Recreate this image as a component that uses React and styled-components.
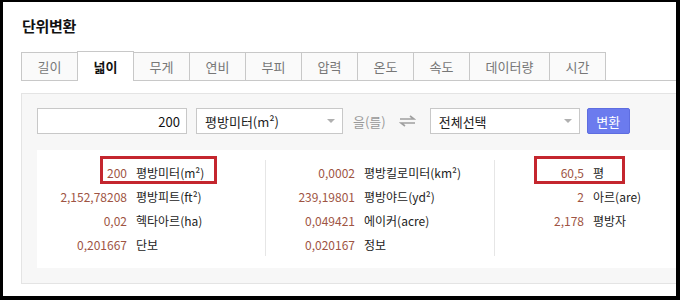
import React, { useState } from 'react';
import styled, { createGlobalStyle } from 'styled-components';

const GlobalStyle = createGlobalStyle`
  html, body {
    margin: 0;
    padding: 0;
    background: #000;
  }
  * {
    box-sizing: border-box;
  }
`;

const FONT = `"Noto Sans CJK KR", "Noto Sans", sans-serif`;

const Frame = styled.div`
  margin: 2px 4px 4px 3px;
  width: 673px;
  height: 294px;
  background: #fff;
  overflow: hidden;
  padding: 13px 0 0 18px;
  font-family: ${FONT};
`;

const Title = styled.h1`
  margin: 0 0 0 1px;
  font-size: 15px;
  line-height: 22px;
  font-weight: 700;
  color: #111;
  letter-spacing: -0.3px;
`;

const TabBar = styled.div`
  display: flex;
  align-items: flex-end;
  height: 30px;
  margin-top: 14px;
  width: 700px;
  border-bottom: 1px solid #c8c8c8;
`;

const Tab = styled.button`
  width: ${p => p.$wide ? 81 : 57}px;
  height: ${p => p.$active ? 30 : 28}px;
  margin: 0 -1px ${p => p.$active ? -1 : 0}px 0;
  padding: 0;
  border: 1px solid #c8c8c8;
  border-bottom: none;
  background: ${p => p.$active ? '#fff' : '#fafafa'};
  color: ${p => p.$active ? '#111' : '#777'};
  font-family: ${FONT};
  font-size: 13px;
  font-weight: ${p => p.$active ? 700 : 400};
  cursor: pointer;
  position: relative;
  z-index: ${p => p.$active ? 1 : 0};
`;

const Panel = styled.div`
  margin-top: 12px;
  width: 720px;
  background: #f7f7f7;
  border: 1px solid #e4e4e4;
  padding: 14px 0 15px 15px;
`;

const FormRow = styled.div`
  display: flex;
  align-items: center;
  height: 26px;
`;

const NumberInput = styled.input`
  width: 150px;
  height: 26px;
  border: 1px solid #c8c8c8;
  background: #fff;
  text-align: right;
  padding: 0 6px 0 0;
  font-family: ${FONT};
  font-size: 13px;
  color: #111;
  outline: none;
`;

const Select = styled.div`
  display: flex;
  align-items: center;
  justify-content: space-between;
  width: ${p => p.$width}px;
  height: 26px;
  margin-left: ${p => p.$gap}px;
  border: 1px solid #c8c8c8;
  background: #fff;
  padding: 0 7px 0 8px;
  font-size: 13px;
  color: #222;
`;

const Caret = styled.span`
  width: 0;
  height: 0;
  border-left: 4px solid transparent;
  border-right: 4px solid transparent;
  border-top: 4px solid #b0b0b0;
`;

const Particle = styled.span`
  margin-left: 10px;
  font-size: 13px;
  color: #999;
`;

const SwapIcon = styled.svg`
  margin-left: 13px;
  display: block;
`;

const ConvertButton = styled.button`
  margin-left: 7px;
  width: 43px;
  height: 26px;
  border: 1px solid #5e6de0;
  border-radius: 2px;
  background: #6b7bee;
  color: #fff;
  font-family: ${FONT};
  font-size: 13px;
  padding: 0;
  cursor: pointer;
`;

const Results = styled.div`
  display: flex;
  margin-top: 16px;
  background: #fff;
  padding: 10px 0 12px 0;
`;

const Column = styled.div`
  position: relative;
  width: ${p => p.$width}px;
  border-left: ${p => p.$first ? 'none' : '1px solid #e6e6e6'};
`;

const Row = styled.div`
  position: relative;
  display: flex;
  align-items: center;
  height: 24px;
  font-size: 12px;
`;

const Value = styled.span`
  width: ${p => p.$first ? 90 : 89}px;
  text-align: right;
  color: #9e5443;
`;

const Unit = styled.span`
  margin-left: 9px;
  color: #222;
`;

const Highlight = styled.span`
  position: absolute;
  top: -4px;
  left: ${p => p.$left}px;
  width: ${p => p.$width}px;
  height: 28px;
  border: 3px solid #c4262e;
  pointer-events: none;
`;

const tabs = ['길이', '넓이', '무게', '연비', '부피', '압력', '온도', '속도', '데이터량', '시간'];

const columns = [
  {
    width: 228,
    rows: [
      { value: '200', unit: '평방미터(m²)', mark: { left: 63, width: 117 } },
      { value: '2,152,78208', unit: '평방피트(ft²)' },
      { value: '0,02', unit: '헥타아르(ha)' },
      { value: '0,201667', unit: '단보' },
    ],
  },
  {
    width: 229,
    rows: [
      { value: '0,0002', unit: '평방킬로미터(km²)' },
      { value: '239,19801', unit: '평방야드(yd²)' },
      { value: '0,049421', unit: '에이커(acre)' },
      { value: '0,020167', unit: '정보' },
    ],
  },
  {
    width: 229,
    rows: [
      { value: '60,5', unit: '평', mark: { left: 39, width: 91 } },
      { value: '2', unit: '아르(are)' },
      { value: '2,178', unit: '평방자' },
    ],
  },
];

export default function App() {
  const [active, setActive] = useState('넓이');
  const [amount, setAmount] = useState('200');

  return (
    <>
      <GlobalStyle />
      <Frame>
        <Title>단위변환</Title>
        <TabBar>
          {tabs.map(t => (
            <Tab
              key={t}
              $active={active === t}
              $wide={t.length > 2}
              onClick={() => setActive(t)}
            >
              {t}
            </Tab>
          ))}
        </TabBar>
        <Panel>
          <FormRow>
            <NumberInput value={amount} onChange={e => setAmount(e.target.value)} />
            <Select $width={147} $gap={9}>
              <span>평방미터(m²)</span>
              <Caret />
            </Select>
            <Particle>을(를)</Particle>
            <SwapIcon width="17" height="12" viewBox="0 0 17 12">
              <path d="M1 4h14L11 1" fill="none" stroke="#a0a0a0" strokeWidth="1.6" />
              <path d="M16 8H2l4 3" fill="none" stroke="#a0a0a0" strokeWidth="1.6" />
            </SwapIcon>
            <Select $width={150} $gap={14}>
              <span>전체선택</span>
              <Caret />
            </Select>
            <ConvertButton>변환</ConvertButton>
          </FormRow>
          <Results>
            {columns.map((col, i) => (
              <Column key={i} $width={col.width} $first={i === 0}>
                {col.rows.map(r => (
                  <Row key={r.unit}>
                    <Value $first={i === 0}>{r.value}</Value>
                    <Unit>{r.unit}</Unit>
                    {r.mark && <Highlight $left={r.mark.left} $width={r.mark.width} />}
                  </Row>
                ))}
              </Column>
            ))}
          </Results>
        </Panel>
      </Frame>
    </>
  );
}
